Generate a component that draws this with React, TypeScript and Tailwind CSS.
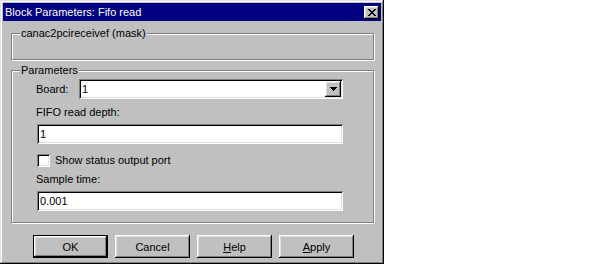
const raised =
  "shadow-[inset_-1px_-1px_#000,inset_1px_1px_#fff,inset_-2px_-2px_#808080,inset_2px_2px_#dfdfdf]";
const sunken =
  "shadow-[inset_1px_1px_#808080,inset_-1px_-1px_#fff,inset_2px_2px_#000,inset_-2px_-2px_#dfdfdf]";
const etched = "border border-[#808080] shadow-[1px_1px_0_#fff,inset_1px_1px_0_#fff]";

function GroupBox({ label, className, children }: { label: string; className: string; children?: React.ReactNode }) {
  return (
    <div className={`relative ml-[8px] mr-[7px] ${etched} ${className}`}>
      <span className="absolute left-[8px] top-[-8px] bg-[#c0c0c0] px-[1px] leading-[14px]">{label}</span>
      {children}
    </div>
  );
}

function Edit({ value }: { value: string }) {
  return (
    <div className={`ml-[25px] flex h-[20px] w-[306px] items-center bg-white pl-[3px] ${sunken}`}>{value}</div>
  );
}

function Button({ children, isDefault }: { children: React.ReactNode; isDefault?: boolean }) {
  return (
    <div className={`h-[23px] w-[75px] ${isDefault ? "border border-black" : ""}`}>
      <div className={`flex h-full w-full items-center justify-center ${raised}`}>{children}</div>
    </div>
  );
}

export default function App() {
  return (
    <div className="h-[268px] w-[600px] bg-white font-['Liberation_Sans',Arial,sans-serif] text-[11px] leading-[14px] text-black">
      <div className="flex h-[264px] w-[384px] flex-col bg-[#c0c0c0] p-[3px] shadow-[inset_-1px_-1px_#000,inset_1px_1px_#dfdfdf,inset_-2px_-2px_#808080,inset_2px_2px_#fff]">
        <div className="flex h-[18px] items-center justify-between bg-[#000080] pl-[2px] pr-[2px] text-white">
          <span>Block Parameters: Fifo read</span>
          <div className={`flex h-[13px] w-[15px] items-center justify-center bg-[#c0c0c0] ${raised}`}>
            <svg width="8" height="7" viewBox="0 0 8 7">
              <path d="M0 0h2v1h1v1h2v-1h1v-1h2v1h-1v1h-1v1h-1v1h1v1h1v1h1v1h-2v-1h-1v-1h-2v1h-1v1h-2v-1h1v-1h1v-1h1v-1h-1v-1h-1v-1h-1z" fill="#000" />
            </svg>
          </div>
        </div>

        <GroupBox label="canac2pcireceivef (mask)" className="mt-[12px] h-[27px]" />

        <GroupBox label="Parameters" className="mt-[10px] flex h-[153px] flex-col">
          <div className="mt-[8px] flex items-center pl-[24px]">
            <span className="w-[43px]">Board:</span>
            <div className={`flex h-[20px] w-[264px] items-center justify-between bg-white pl-[3px] pr-[2px] ${sunken}`}>
              <span>1</span>
              <div className={`flex h-[16px] w-[16px] items-center justify-center bg-[#c0c0c0] ${raised}`}>
                <svg width="7" height="4" viewBox="0 0 7 4">
                  <path d="M0 0h7v1h-1v1h-1v1h-1v1h-1v-1h-1v-1h-1v-1h-1z" fill="#000" />
                </svg>
              </div>
            </div>
          </div>
          <span className="mt-[6px] pl-[24px]">FIFO read depth:</span>
          <div className="mt-[5px]">
            <Edit value="1" />
          </div>
          <div className="mt-[9px] flex items-center pl-[25px]">
            <div className={`h-[13px] w-[13px] bg-white ${sunken}`} />
            <span className="ml-[5px]">Show status output port</span>
          </div>
          <span className="mt-[5px] pl-[24px]">Sample time:</span>
          <div className="mt-[5px]">
            <Edit value="0.001" />
          </div>
        </GroupBox>

        <div className="mt-[12px] flex gap-[7px] pl-[30px]">
          <Button isDefault>OK</Button>
          <Button>Cancel</Button>
          <Button>
            <span><u>H</u>elp</span>
          </Button>
          <Button>
            <span><u>A</u>pply</span>
          </Button>
        </div>
      </div>
    </div>
  );
}
